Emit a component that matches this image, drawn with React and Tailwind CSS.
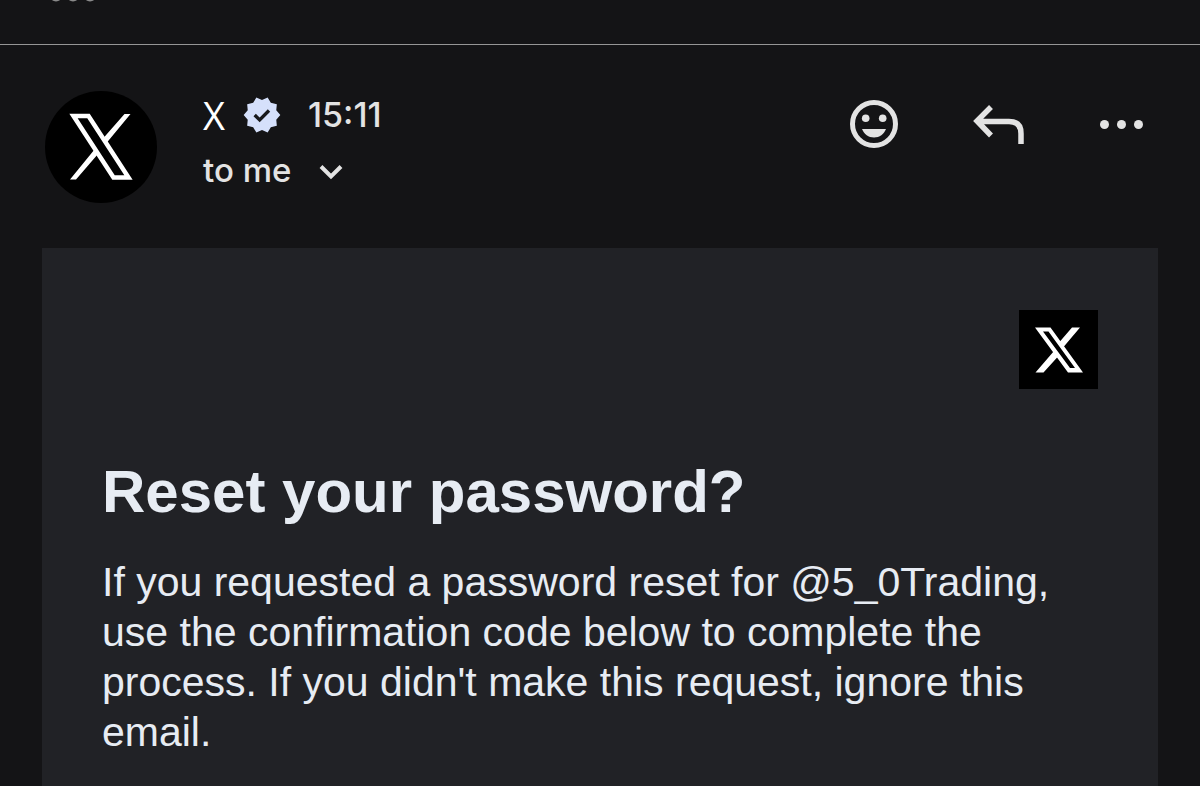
const ThinXLogo = () => (
    <svg viewBox="0 0 112 112" className="size-28 shrink-0 rounded-full bg-black" role="img" aria-label="X">
        <path fill="none" stroke="#fff" strokeWidth="4.500" d="M28.500 25H43.500L83.500 86.500H68.500Z" />
        <path fill="#fff" d="M79.500 23H85.500L61.500 52L58 47.500ZM25 88.500H31L53 63L49.500 58.500Z" />
    </svg>
);

const BoldXLogo = () => (
    <svg viewBox="0 0 79 79" className="size-[79px] bg-black" role="img" aria-label="X">
        <path fill="#fff" fillRule="evenodd" d="M16 17.500H31.500L64 62.500H49ZM24 21.500L51 58H56L29.500 21.500Z" />
        <path fill="#fff" d="M53 17.500H61L44.500 37L40.500 32ZM16.500 62.500H24.500L39 46.500L35 41Z" />
    </svg>
);

const VerifiedIcon = () => (
    <svg viewBox="0 0 24 24" className="size-10" role="img" aria-label="Verified">
        <path
            fill="#d5e0fb"
            d="M23 12l-2.440-2.780.340-3.680-3.610-.820-1.890-3.180L12 3 8.600 1.540 6.710 4.720l-3.610.810.340 3.680L1 12l2.440 2.780-.340 3.690 3.610.820 1.890 3.180L12 21l3.400 1.460 1.890-3.180 3.610-.820-.340-3.680L23 12z"
        />
        <path fill="none" stroke="#18191c" strokeWidth="2" d="M7.600 12l3 3 5.600-5.700" />
    </svg>
);

const SmileIcon = () => (
    <svg viewBox="0 0 48 48" className="size-12">
        <circle cx="24" cy="24" r="21.500" fill="none" stroke="currentColor" strokeWidth="5" />
        <circle cx="15.700" cy="18.300" r="3.800" fill="currentColor" />
        <circle cx="32.700" cy="18.300" r="3.800" fill="currentColor" />
        <path fill="currentColor" d="M12 29H36C34 34 29.500 37.500 24 37.500S14 34 12 29Z" />
    </svg>
);

const ReplyIcon = () => (
    <svg viewBox="0 0 52 48" className="h-12 w-[52px]" fill="none" stroke="currentColor" strokeWidth="5.500">
        <path d="M18 7L4 21L18 35.500M5 21.500H36Q48 21.500 48 33.500V44" />
    </svg>
);

const MoreIcon = () => (
    <svg viewBox="0 0 44 48" className="h-12 w-11" fill="currentColor">
        <circle cx="4.500" cy="24.500" r="4.500" />
        <circle cx="21.500" cy="24.500" r="4.500" />
        <circle cx="38.500" cy="24.500" r="4.500" />
    </svg>
);

const actions = [
    { label: 'Add reaction', icon: <SmileIcon /> },
    { label: 'Reply', icon: <ReplyIcon /> },
    { label: 'More options', icon: <MoreIcon /> },
];

const App = () => {
    return (
        <div className="min-h-screen bg-[#141416] font-['Inter',sans-serif] text-[#e3e3e3]">
            {/* Tail of the previous, collapsed message */}
            <div className="h-[45px] overflow-hidden border-b border-[#969696] pl-[50px]">
                <svg viewBox="0 0 50 2" className="h-[2px] w-[50px]" fill="#8a8a8a">
                    <circle cx="6" cy="-5" r="6.500" />
                    <circle cx="23" cy="-5" r="6.500" />
                    <circle cx="40" cy="-5" r="6.500" />
                </svg>
            </div>

            <header className="flex items-start pt-[46px] pr-14 pl-[45px]">
                <ThinXLogo />
                <div className="ml-[46px] flex-1">
                    <div className="flex h-12 items-center">
                        <span className="font-['Open_Sans',sans-serif] text-[38px] leading-12 text-white">X</span>
                        <span className="ml-[17px]">
                            <VerifiedIcon />
                        </span>
                        <time className="ml-[26px] text-[34px] leading-12 font-medium">15:11</time>
                    </div>
                    <button type="button" className="mt-[7px] flex items-center text-[33px] leading-12 font-medium">
                        to me
                        <svg viewBox="0 0 24 16" className="mt-1 ml-7 h-4 w-6" fill="none" stroke="currentColor" strokeWidth="4">
                            <path d="M2 2.500L12 12.500L22 2.500" />
                        </svg>
                    </button>
                </div>
                <div className="mt-[9px] flex items-center gap-[75px]">
                    {actions.map((action) => (
                        <button key={action.label} type="button" aria-label={action.label}>
                            {action.icon}
                        </button>
                    ))}
                </div>
            </header>

            <main className="mx-[42px] mt-[45px] min-h-[538px] bg-[#212226] px-[60px] pt-[62px] font-['Liberation_Sans',sans-serif] text-[#e7ecf3]">
                <div className="flex justify-end">
                    <BoldXLogo />
                </div>
                <h1 className="mt-[68px] text-[60px] leading-[70px] font-bold">Reset your password?</h1>
                <p className="mt-[30px] text-[41px] leading-[50px]">
                    If you requested a password reset for @5_0Trading, use the confirmation code below to complete the
                    process. If you didn't make this request, ignore this email.
                </p>
            </main>
        </div>
    );
};

export default App;
